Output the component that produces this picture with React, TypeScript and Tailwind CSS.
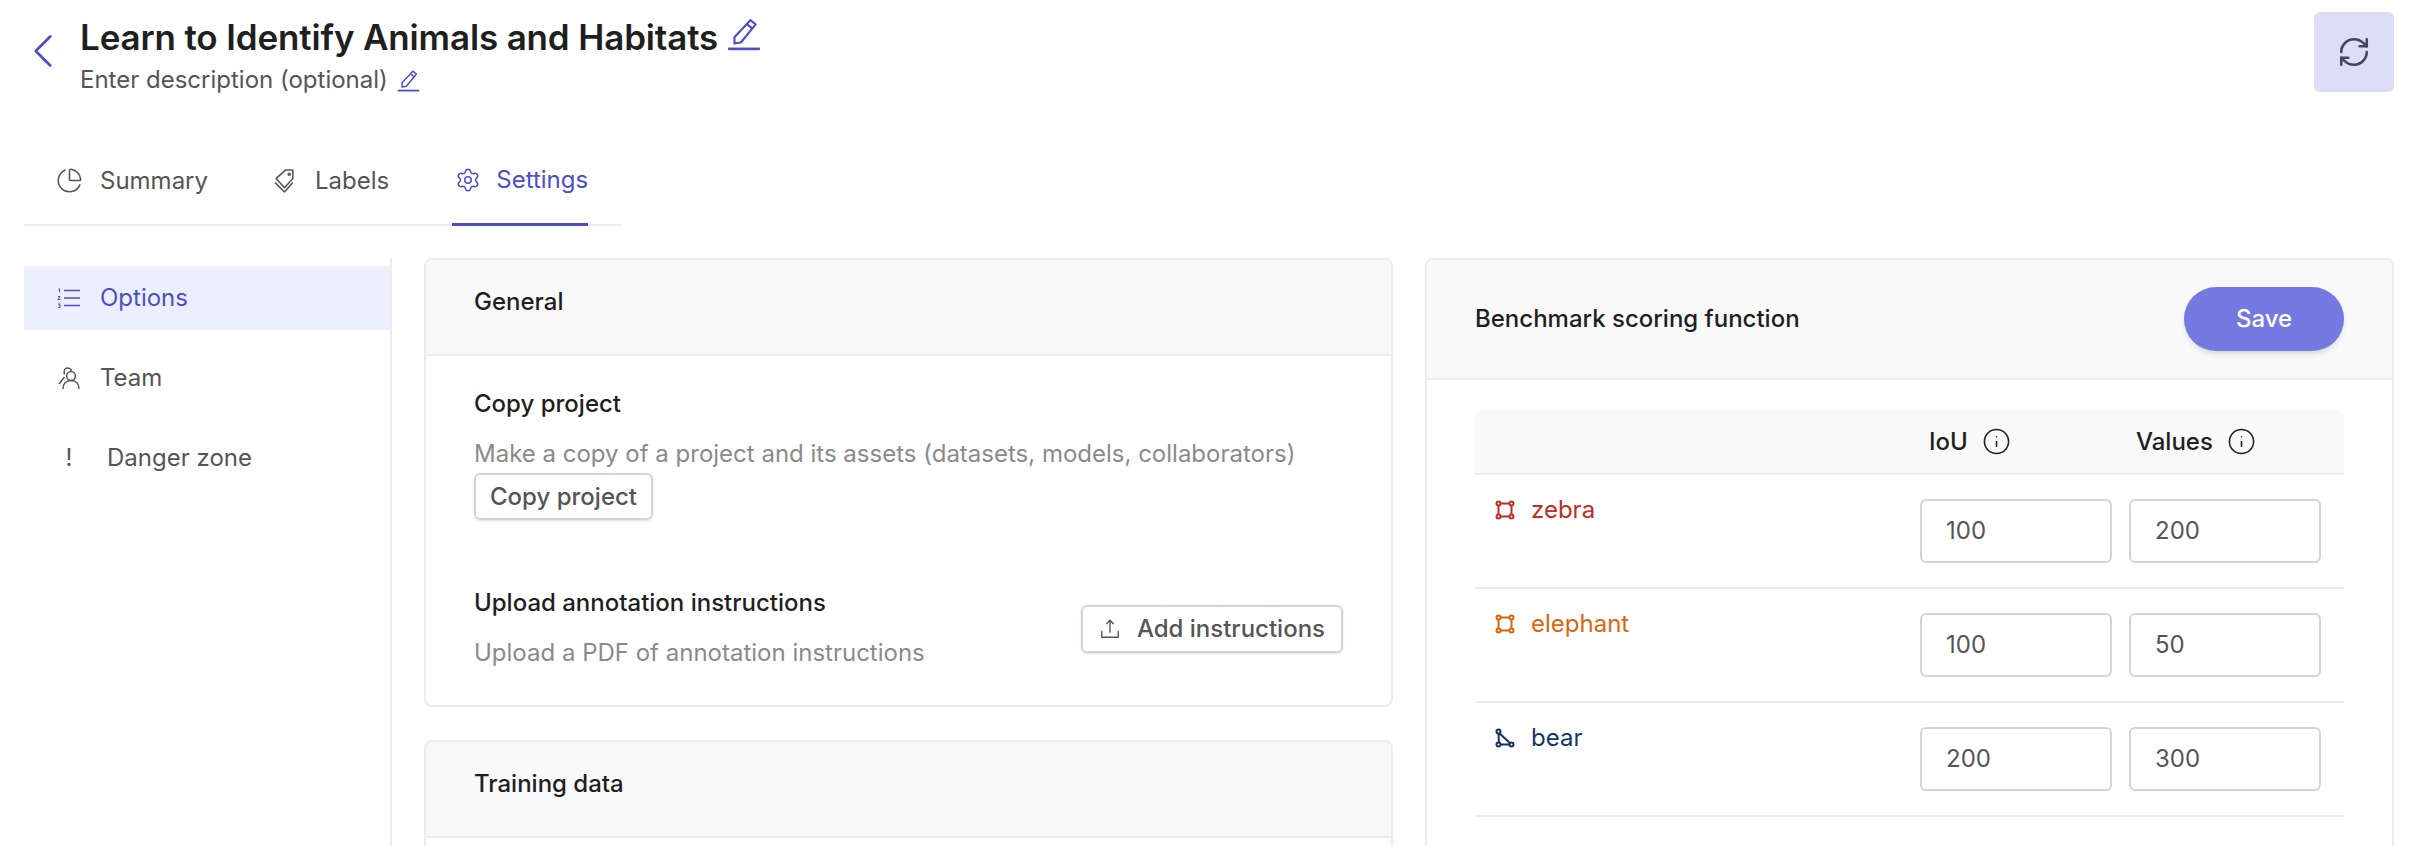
import { ChartPie, ChevronLeft, Info, RefreshCw, Settings } from "lucide-react";

const rows = [
  { name: "zebra", color: "text-[#c02d22]", shape: "rect", iou: "100", value: "200" },
  { name: "elephant", color: "text-[#d9670c]", shape: "rect", iou: "100", value: "50" },
  { name: "bear", color: "text-[#17355f]", shape: "poly", iou: "200", value: "300" },
];

function EditIcon({ className }: { className: string }) {
  return (
    <svg viewBox="0 0 32 32" fill="none" stroke="currentColor" strokeWidth="2" className={className}>
      <path d="M22 3l5 4L13 24l-6 1 0-6L22 3z" strokeLinejoin="round" />
      <path d="M19 7l5 4" />
      <path d="M1 30h30" strokeWidth="2.5" />
    </svg>
  );
}

function TagsIcon() {
  return (
    <svg viewBox="0 0 24 24" fill="none" stroke="currentColor" strokeWidth="1.5" className="size-[25px]">
      <path d="M4 10l9-8h7v8l-8 9-8-9z" strokeLinejoin="round" />
      <circle cx="16.500" cy="6" r="1" />
      <path d="M3 14l9 9 8-9" strokeLinejoin="round" />
    </svg>
  );
}

function OrderedIcon() {
  return (
    <svg viewBox="0 0 24 24" fill="none" stroke="currentColor" strokeWidth="1.5" className="size-[24px]">
      <path d="M7 4.500h16M7 12h16M7 19.500h16" />
      <path d="M1.500 3.500l1-.8v3.600M1 10.500h2L1 13.500h2.200M1 18h2.200l-1 1.400h1v2H1" strokeWidth="1" />
    </svg>
  );
}

function TeamIcon() {
  return (
    <svg viewBox="0 0 24 24" fill="none" stroke="currentColor" strokeWidth="1.500" className="size-[24px]">
      <circle cx="14" cy="10" r="4.400" />
      <path d="M6 23c0-5 3-8.500 8-8.500s8 3.500 8 8.500" />
      <path d="M7.500 8.500C6.500 4 8 2 10.500 2c2 0 3.500 1 4 3M7.500 11 2 18" />
    </svg>
  );
}

function UploadIcon() {
  return (
    <svg viewBox="0 0 24 24" fill="none" stroke="currentColor" strokeWidth="1.500" className="size-[22px]">
      <path d="M12 16V3M8 6.500 12 2.500l4 4" />
      <path d="M3 14v7h18v-7" />
    </svg>
  );
}

function ShapeIcon({ shape }: { shape: string }) {
  if (shape === "poly") {
    return (
      <svg viewBox="0 0 20 20" fill="none" stroke="currentColor" strokeWidth="2" className="size-[20px]">
        <path d="M3.500 4.500 4 16.500h12.500z" />
        <circle cx="3.500" cy="3.500" r="2" fill="white" />
        <circle cx="3.500" cy="16.500" r="2" fill="white" />
        <circle cx="16.500" cy="16.500" r="2" fill="white" />
      </svg>
    );
  }
  return (
    <svg viewBox="0 0 20 20" fill="none" stroke="currentColor" strokeWidth="2" className="size-[20px]">
      <rect x="3.500" y="3.500" width="13" height="13" />
      <circle cx="3.500" cy="3.500" r="2" fill="white" />
      <circle cx="16.500" cy="3.500" r="2" fill="white" />
      <circle cx="3.500" cy="16.500" r="2" fill="white" />
      <circle cx="16.500" cy="16.500" r="2" fill="white" />
    </svg>
  );
}

function CardHeader({ title }: { title: string }) {
  return (
    <div className="h-[96px] border-b-2 border-[#ececec] bg-[#f9f9f9] px-[48px] pt-[24px] font-medium text-[#1f1f1f]">
      {title}
    </div>
  );
}

export default function App() {
  return (
    <div className="h-[846px] w-[2410px] overflow-hidden bg-white font-['Inter',sans-serif] text-[24px] text-[#555555]">
      <div className="flex h-[106px] items-start justify-between pl-[14px] pr-[16px] pt-[12px]">
        <div className="flex items-start gap-[8px]">
          <ChevronLeft className="mt-[10px] size-[58px] text-[#4b4fc7]" strokeWidth={1.1} />
          <div>
            <div className="flex h-[50px] items-center gap-[9px] text-[35px] font-semibold tracking-[-0.15px] text-[#1f1f1f]">
              Learn to Identify Animals and Habitats
              <EditIcon className="mb-[6px] size-[34px] text-[#4b4fc7]" />
            </div>
            <div className="mt-[2px] flex h-[32px] items-center gap-[9px]">
              Enter description (optional)
              <EditIcon className="size-[23px] text-[#4b4fc7]" />
            </div>
          </div>
        </div>
        <button className="flex size-[80px] items-center justify-center rounded-[6px] bg-[#dcdef8] text-[#44475a]">
          <RefreshCw className="size-[34px]" strokeWidth={1.8} />
        </button>
      </div>

      <div className="ml-[24px] flex h-[120px] w-[597px] items-end border-b-2 border-[#ececec] pl-[32px]">
        <div className="flex h-[90px] items-center gap-[17px] pt-[3px]">
          <ChartPie className="size-[27px]" strokeWidth={1.4} />
          Summary
        </div>
        <div className="ml-[64px] flex h-[90px] items-center gap-[18px] pt-[3px]">
          <TagsIcon />
          Labels
        </div>
        <div className="-mb-[2px] ml-[63px] flex h-[92px] items-center gap-[15px] border-b-[3px] border-[#4b4fc7] pl-[3px] pt-[3px] text-[#4b4fc7]">
          <Settings className="size-[26px]" strokeWidth={1.4} />
          Settings
        </div>
      </div>

      <div className="mt-[32px] flex items-start">
        <div className="ml-[24px] flex h-[700px] w-[368px] flex-col border-r-2 border-[#ececec] pt-[8px]">
          <div className="flex h-[64px] items-center gap-[19px] bg-[#ecf0fe] pl-[33px] text-[#4b4fc7]">
            <OrderedIcon />
            Options
          </div>
          <div className="mt-[16px] flex h-[64px] items-center gap-[19px] pl-[33px]">
            <TeamIcon />
            Team
          </div>
          <div className="mt-[16px] flex h-[64px] items-center pl-[33px]">
            <span className="w-[24px] text-center">!</span>
            <span className="ml-[26px]">Danger zone</span>
          </div>
        </div>

        <div className="ml-[32px] flex w-[969px] flex-col gap-[33px]">
          <div className="overflow-hidden rounded-[8px] border-2 border-[#ececec]">
            <CardHeader title="General" />
            <div className="h-[349px] px-[48px] pt-[30px]">
              <div className="font-medium text-[#1f1f1f]">Copy project</div>
              <div className="mt-[14px] text-[#8a8a8a]">Make a copy of a project and its assets (datasets, models, collaborators)</div>
              <button className="mt-[1px] block h-[47px] rounded-[6px] border-2 border-[#d4d4d4] px-[14px] font-medium text-[#555555] shadow-sm">
                Copy project
              </button>
              <div className="mt-[65px] flex items-center justify-between">
                <div>
                  <div className="font-medium text-[#1f1f1f]">Upload annotation instructions</div>
                  <div className="mt-[14px] text-[#8a8a8a]">Upload a PDF of annotation instructions</div>
                </div>
                <button className="mt-[2px] flex h-[48px] items-center gap-[16px] rounded-[6px] border-2 border-[#d4d4d4] px-[16px] font-medium text-[#555555] shadow-sm">
                  <UploadIcon />
                  Add instructions
                </button>
              </div>
            </div>
          </div>
          <div className="overflow-hidden rounded-[8px] border-2 border-[#ececec]">
            <CardHeader title="Training data" />
            <div className="h-[100px]" />
          </div>
        </div>

        <div className="ml-[32px] w-[969px] overflow-hidden rounded-[8px] border-2 border-[#ececec]">
          <div className="flex h-[120px] items-center justify-between border-b-2 border-[#ececec] bg-[#f9f9f9] pl-[48px] pr-[48px]">
            <span className="font-medium text-[#1f1f1f]">Benchmark scoring function</span>
            <button className="h-[64px] w-[160px] rounded-full bg-[#757ae3] font-medium text-white shadow-md">Save</button>
          </div>
          <div className="px-[48px] pt-[30px] pb-[100px]">
            <div className="flex h-[65px] items-center rounded-t-[8px] border-b-2 border-[#ececec] bg-[#f9f9f9] font-medium text-[#1f1f1f]">
              <div className="w-[452px]" />
              <div className="flex w-[209px] items-center gap-[14px] pl-[2px]">
                IoU
                <Info className="size-[29px]" strokeWidth={1.3} />
              </div>
              <div className="flex items-center gap-[14px]">
                Values
                <Info className="size-[29px]" strokeWidth={1.3} />
              </div>
            </div>
            {rows.map((row) => (
              <div key={row.name} className="flex h-[114px] border-b-2 border-[#ececec]">
                <div className={`flex h-[70px] w-[445px] items-center gap-[16px] pl-[20px] ${row.color}`}>
                  <ShapeIcon shape={row.shape} />
                  {row.name}
                </div>
                <div className="flex gap-[17px] pt-[24px]">
                  <div className="flex h-[64px] w-[192px] items-center rounded-[6px] border-2 border-[#d4d4d4] pl-[24px]">{row.iou}</div>
                  <div className="flex h-[64px] w-[192px] items-center rounded-[6px] border-2 border-[#d4d4d4] pl-[24px]">{row.value}</div>
                </div>
              </div>
            ))}
          </div>
        </div>
      </div>
    </div>
  );
}
